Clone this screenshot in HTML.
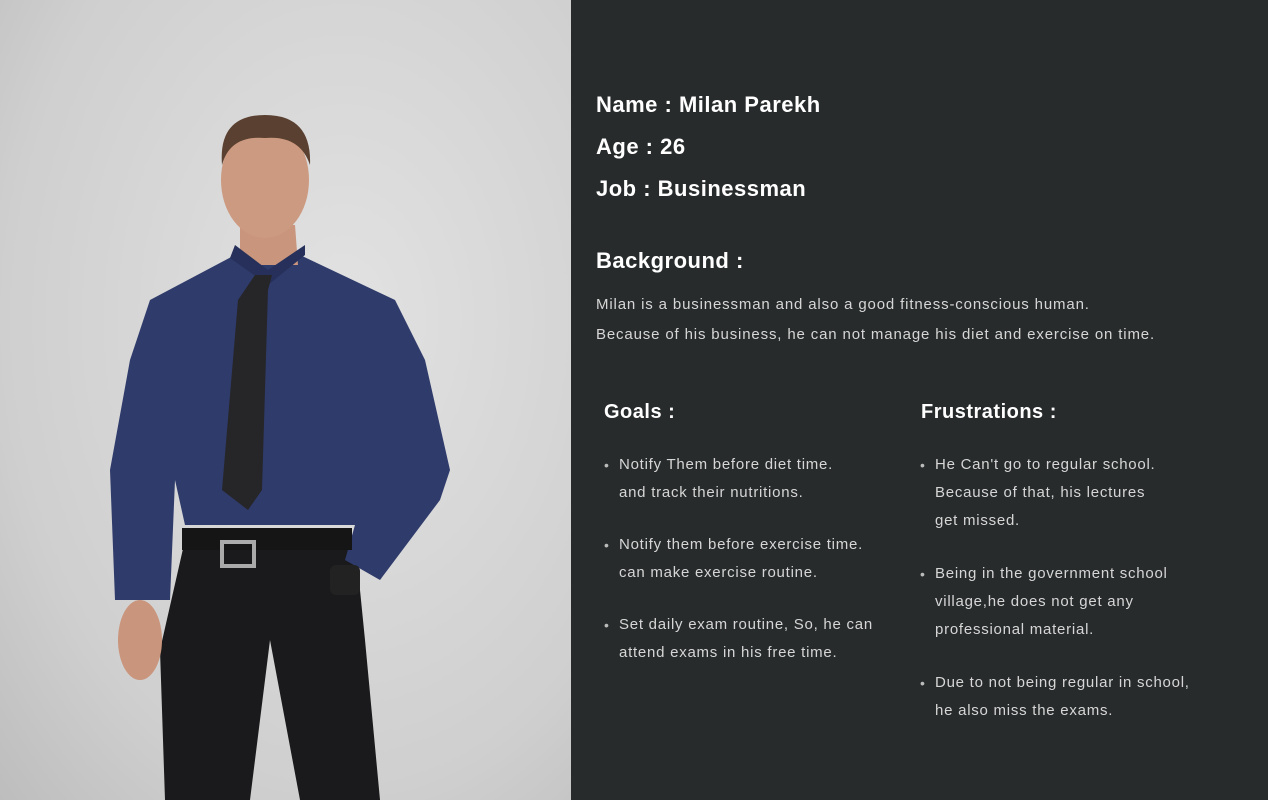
<!DOCTYPE html>
<html><head><style>
*{margin:0;padding:0;box-sizing:border-box}
html,body{width:1268px;height:800px;overflow:hidden}
body{font-family:"Liberation Sans",sans-serif;position:relative;background:#272b2c}
#photo{position:absolute;left:0;top:0;width:571px;height:800px;background:radial-gradient(ellipse at 60% 40%,#e2e2e2,#cfcfcf 70%,#bdbdbd)}
#panel{position:absolute;left:571px;top:0;width:697px;height:800px;background:#272b2c;color:#fff}
.h{position:absolute;font-weight:bold;font-size:22px;color:#fff;white-space:nowrap;letter-spacing:0.5px}
.p{position:absolute;font-size:15px;color:#d6d6d6;line-height:30px;white-space:nowrap;letter-spacing:0.85px}
.li{position:absolute;font-size:15px;color:#d6d6d6;line-height:28px;white-space:nowrap;padding-left:15px;letter-spacing:0.75px}
.li:before{content:"•";position:absolute;left:0;font-size:14px;color:#bbb}
</style></head><body>
<div id="photo">
<svg width="571" height="800" viewBox="0 0 571 800">
<path d="M185 540 L355 540 L365 640 L380 800 L300 800 L270 640 L250 800 L165 800 L160 650 Z" fill="#1a1a1c"/>
<path d="M150 300 L235 255 L300 255 L395 300 L425 360 L450 470 L440 500 L380 580 L345 560 L355 525 L185 525 L175 480 L170 600 L115 600 L110 470 L130 360 Z" fill="#2f3b6b"/>
<rect x="182" y="528" width="170" height="22" fill="#151515"/>
<rect x="222" y="542" width="32" height="24" fill="none" stroke="#aaa" stroke-width="4"/>
<path d="M240 225 L295 225 L298 265 L240 265 Z" fill="#c9957c"/>
<path d="M230 258 L268 285 L305 255 L305 245 L268 270 L235 245 Z" fill="#26305a"/>
<path d="M255 275 L272 275 L268 290 L262 490 L248 510 L222 490 L238 300 Z" fill="#262628"/>
<ellipse cx="265" cy="180" rx="44" ry="58" fill="#cc9a80"/>
<path d="M222 165 Q218 115 265 115 Q312 115 310 165 Q300 135 265 138 Q230 135 222 165Z" fill="#5a4030"/>
<ellipse cx="140" cy="640" rx="22" ry="40" fill="#c9957c"/>
<rect x="330" y="565" width="30" height="30" rx="6" fill="#222"/>
</svg>
</div>
<div id="panel">
<div class="h" style="left:25px;top:92px">Name : Milan Parekh</div>
<div class="h" style="left:25px;top:134px">Age : 26</div>
<div class="h" style="left:25px;top:176px">Job : Businessman</div>
<div class="h" style="left:25px;top:248px">Background :</div>
<div class="p" style="left:25px;top:290px">Milan is a businessman and also a good fitness-conscious human.<br>Because of his business, he can not manage his diet and exercise on time.</div>
<div class="h" style="left:33px;top:401px;font-size:20px">Goals :</div>
<div class="h" style="left:350px;top:401px;font-size:20px">Frustrations :</div>
<div class="li" style="left:33px;top:451px">Notify Them before diet time.<br>and track their nutritions.</div>
<div class="li" style="left:33px;top:531px">Notify them before exercise time.<br>can make exercise routine.</div>
<div class="li" style="left:33px;top:611px">Set daily exam routine, So, he can<br>attend exams in his free time.</div>
<div class="li" style="left:349px;top:451px">He Can't go to regular school.<br>Because of that, his lectures<br>get missed.</div>
<div class="li" style="left:349px;top:560px">Being in the government school<br>village,he does not get any<br>professional material.</div>
<div class="li" style="left:349px;top:669px">Due to not being regular in school,<br>he also miss the exams.</div>
</div>
</body></html>
